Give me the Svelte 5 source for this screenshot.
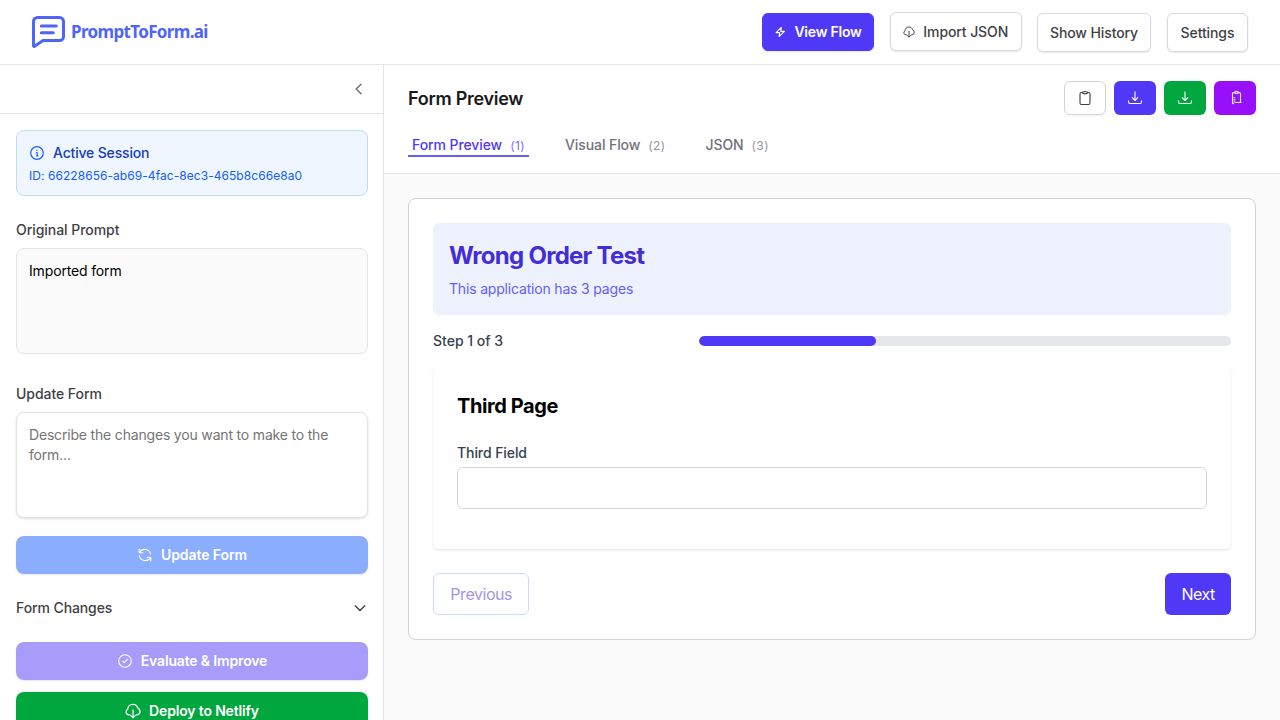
<script lang="ts">
  const tabs = [
    { label: 'Form Preview', key: '(1)' },
    { label: 'Visual Flow', key: '(2)' },
    { label: 'JSON', key: '(3)' },
  ];
  const sessionId = '66228656-ab69-4fac-8ec3-465b8c66e8a0';
  let active = $state(0);
  const progress = 100 / 3;
</script>

{#snippet cloud(size: number)}
  <svg width={size} height={size} viewBox="0 0 16 16" class="cloud">
    <path d="M4.800 11.800H3.900A2.900 2.900 0 0 1 2.700 6.300C2.800 3.600 4.900 1.300 7.800 1.300c2.400 0 4.400 1.500 5 3.800a3.500 3.500 0 0 1-.7 6.700H11.200M8 7v7.700M5.800 12.600 8 14.800l2.200-2.200" />
  </svg>
{/snippet}

{#snippet download()}
  <svg width="16" height="16" viewBox="0 0 16 16">
    <path d="M8 1.800v8.600M5.200 7.700 8 10.500l2.800-2.800M1.500 10.800v1.100c0 1 .6 1.600 1.600 1.600h9.800c1 0 1.600-.6 1.600-1.600v-1.100" />
  </svg>
{/snippet}

<div class="app">
  <header class="topbar">
    <div class="brand">
      <svg class="logo" width="33" height="32" viewBox="0 0 33 32">
        <path d="M5 1.500h22.500a4 4 0 0 1 4 4v15a4 4 0 0 1-4 4H11L2.600 30.300c-.5.400-1.100.1-1.100-.6V5.500a4 4 0 0 1 4-4Z" />
        <path d="M9.300 10h15M9.300 16.700h12" />
      </svg>
      <span>PromptToForm.ai</span>
    </div>
    <nav class="actions">
      <button class="btn solid flow">
        <svg width="12" height="12" viewBox="0 0 12 12"><path d="M7.300 1.500 2.100 6.600h3.500L5.100 10.500 10.400 5.400H6.900Z" /></svg>
        View Flow
      </button>
      <button class="btn import">{@render cloud(12)}Import JSON</button>
      <button class="btn history">Show History</button>
      <button class="btn settings">Settings</button>
    </nav>
  </header>

  <div class="body">
    <aside>
      <div class="collapse">
        <svg width="16" height="16" viewBox="0 0 16 16"><path d="M10 3.200 5.200 8l4.800 4.800" /></svg>
      </div>
      <div class="side">
        <section class="session">
          <div class="session-title">
            <svg width="16" height="16" viewBox="0 0 16 16"><circle cx="8" cy="8" r="6.300" /><path d="M7.400 7.500H8.200v3M7.600 10.800h1.300M7.900 5.100v.4" /></svg>
            Active Session
          </div>
          <div class="session-id">ID: {sessionId}</div>
        </section>

        <div class="label">Original Prompt</div>
        <div class="prompt">Imported form</div>

        <div class="label update">Update Form</div>
        <textarea placeholder="Describe the changes you want to make to the form..."></textarea>

        <button class="wide blue">
          <svg width="16" height="16" viewBox="0 0 16 16"><path d="M2.200 2v3.700h3.700M13.800 14v-3.700h-3.700M2.500 5.500A6 6 0 0 1 13.600 7.200M13.500 10.500A6 6 0 0 1 2.400 8.800" /></svg>
          Update Form
        </button>
        <div class="changes">
          Form Changes
          <svg width="16" height="16" viewBox="0 0 16 16"><path d="M3.300 5.700 8 10.400l4.700-4.700" /></svg>
        </div>
        <button class="wide violet">
          <svg width="16" height="16" viewBox="0 0 16 16"><circle cx="8" cy="8" r="6.300" /><path d="m5.700 8.200 1.600 1.500 3-3.400" /></svg>
          Evaluate &amp; Improve
        </button>
        <button class="wide green">{@render cloud(16)}Deploy to Netlify</button>
      </div>
    </aside>

    <main>
      <div class="main-head">
        <div class="title-row">
          <h1>Form Preview</h1>
          <div class="tools">
            <button class="tool plain" aria-label="Copy">
              <svg width="16" height="16" viewBox="0 0 16 16"><path d="M5.500 2.500h-1A1.500 1.500 0 0 0 3 4v9a1.500 1.500 0 0 0 1.500 1.500h7A1.500 1.500 0 0 0 13 13V4a1.500 1.500 0 0 0-1.500-1.500h-1M5.500 2.500C5.500 1.800 6.200 1.500 8 1.500s2.500.3 2.500 1c0 .8-.6 1.100-1.100 1.100H6.600c-.5 0-1.100-.3-1.100-1.100Z" /></svg>
            </button>
            <button class="tool indigo" aria-label="Download JSON">{@render download()}</button>
            <button class="tool emerald" aria-label="Download form">{@render download()}</button>
            <button class="tool purple" aria-label="Copy form">
              <svg width="16" height="16" viewBox="0 0 16 16"><path d="M7.700 2.500H7c-1 0-1.500.5-1.500 1.500v3.500M5.500 7.500v5.200c0 .7.300 1 1.200 1M11.300 2.500h.7c1 0 1.500.5 1.500 1.500v8.500H8M7.700 2.500c0-.8.600-1.100 1.800-1.100s1.800.3 1.800 1.100-.6 1-1 1H8.700c-.4 0-1-.2-1-1ZM7 7.800h.8M7 9.500h.8M7 11.200h.8M13.500 12.500h.5" /></svg>
            </button>
          </div>
        </div>
        <div class="tabs">
          {#each tabs as tab, i}
            <button class="tab" class:active={active === i} onclick={() => (active = i)}>{tab.label}<span>{tab.key}</span></button>
          {/each}
        </div>
      </div>

      <div class="canvas">
        <div class="card">
          <div class="banner">
            <h2>Wrong Order Test</h2>
            <p>This application has 3 pages</p>
          </div>
          <div class="step">
            <span>Step 1 of 3</span>
            <div class="track"><div class="fill" style="width: {progress}%"></div></div>
          </div>
          <div class="page">
            <h3>Third Page</h3>
            <label for="third">Third Field</label>
            <input id="third" type="text" />
          </div>
          <div class="pager">
            <button class="prev">Previous</button>
            <button class="next">Next</button>
          </div>
        </div>
      </div>
    </main>
  </div>
</div>

<style>
  :global(body) { margin: 0; background: #fff; overflow: hidden; }
  * { box-sizing: border-box; }
  .app { height: 720px; overflow: hidden; display: flex; flex-direction: column; font: 14px/20px Inter, sans-serif; color: #3f3f46; letter-spacing: -0.05px; }
  button, input, textarea { font: inherit; letter-spacing: inherit; margin: 0; }
  button { padding: 0; border: 0; background: none; color: inherit; white-space: nowrap; }
  h1, h2, h3, p { margin: 0; }
  svg { flex: none; display: block; fill: none; stroke: currentColor; stroke-width: 1.1; stroke-linecap: round; stroke-linejoin: round; }
  .cloud { stroke-width: 1.25; }

  .topbar { flex: none; height: 65px; border-bottom: 1px solid #e4e4e7; display: flex; justify-content: space-between; padding: 0 32px; }
  .brand { display: flex; align-items: center; gap: 6px; height: 64px; color: #4f65fa; font: 700 17px/24px "Noto Sans", sans-serif; letter-spacing: -0.65px; }
  .brand span { margin-top: -1px; }
  .logo { stroke-width: 3; }
  .actions { display: flex; align-items: flex-start; gap: 16px; padding-top: 13px; }
  .btn { height: 39px; border: 1px solid #d9d9dc; border-radius: 6px; background: #fff; display: flex; align-items: center; justify-content: center; gap: 8px; font-weight: 500; letter-spacing: -0.1px; box-shadow: 0 1px 2px #0000001a; }
  .solid { background: #4f39f6; border-color: #4f39f6; color: #fff; font-weight: 600; letter-spacing: -0.22px; }
  .flow { width: 112px; height: 38px; }
  .import { width: 131.5px; margin: -1px -0.5px 0 0; }
  .history { width: 114px; }
  .settings { width: 81px; }

  .body { flex: 1; min-height: 0; display: flex; }
  aside { width: 384px; flex: none; border-right: 1px solid #e4e4e7; }
  .collapse { height: 49px; border-bottom: 1px solid #e4e4e7; display: flex; align-items: center; justify-content: flex-end; padding-right: 16px; color: #71717b; }
  .collapse svg { stroke-width: 1.5; }
  .side { padding: 16px 15px 0 16px; display: flex; flex-direction: column; }
  .session { height: 66px; border: 1px solid #bedbff; border-radius: 8px; background: #eff6ff; padding: 12px; color: #155dfc; }
  .session-title { display: flex; align-items: center; gap: 8px; font-weight: 500; color: #193cb8; letter-spacing: -0.17px; }
  .session-title svg { color: #155dfc; stroke-width: 1.2; }
  .session-id { font-size: 12px; line-height: 16px; margin-top: 5px; letter-spacing: 0.055px; }
  .label { font-weight: 500; margin: 24px 0 8px; }
  .prompt { height: 106px; border: 1px solid #e4e4e7; border-radius: 8px; background: #fafafa; padding: 12px; color: #000; letter-spacing: -0.15px; }
  .label.update { margin-top: 30px; }
  textarea { display: block; width: 100%; height: 106px; padding: 12px; border: 1px solid #e4e4e7; border-radius: 8px; resize: none; background: #fff; box-shadow: 0 1px 3px #0000001f; overflow: hidden; letter-spacing: -0.18px; }
  textarea::placeholder { color: #757575; opacity: 1; }
  .wide { height: 38px; border-radius: 8px; display: flex; align-items: center; justify-content: center; gap: 8px; color: #fff; font-weight: 600; letter-spacing: -0.16px; box-shadow: 0 1px 2px #0000001a; }
  .blue { background: #8aadfe; margin-top: 18px; letter-spacing: -0.09px; }
  .violet { background: #a79cfa; }
  .green { background: #00a63e; margin-top: 12px; }
  .changes { height: 68px; display: flex; align-items: center; justify-content: space-between; font-weight: 500; letter-spacing: -0.1px; }
  .changes svg { stroke-width: 1.4; }

  main { flex: 1; min-width: 0; background: #fafafa; }
  .main-head { height: 109px; background: #fff; border-bottom: 1px solid #e4e4e7; padding: 16px 24px 0; }
  .title-row { height: 34px; display: flex; align-items: center; justify-content: space-between; }
  h1 { font-size: 18px; line-height: 28px; font-weight: 600; color: #18181b; letter-spacing: -0.27px; padding-top: 2px; }
  .tools { display: flex; gap: 8px; }
  .tool { width: 42px; height: 34px; border-radius: 6px; color: #fff; display: flex; align-items: center; justify-content: center; }
  .plain { border: 1px solid #d4d4d8; color: #3f3f46; box-shadow: 0 1px 2px #0000000d; }
  .indigo { background: #4f39f6; }
  .emerald { background: #00a63e; }
  .purple { background: #980ffa; }
  .tabs { display: flex; gap: 32px; margin-top: 20px; }
  .tab { height: 22px; padding: 0 4px; border-bottom: 2px solid transparent; font-weight: 500; color: #71717b; display: flex; align-items: center; gap: 8px; letter-spacing: -0.09px; }
  .tab span { font-size: 12px; font-weight: 400; opacity: .75; letter-spacing: 0.4px; padding-top: 1px; }
  .active { color: #4f39f6; border-color: #615fff; }

  .canvas { padding: 24px; }
  .card { height: 442px; border: 1px solid #d4d4d8; border-radius: 8px; background: #fff; padding: 24px; display: flex; flex-direction: column; }
  .banner { height: 92px; background: #eef2ff; border-radius: 6px; padding: 16px; color: #615fff; }
  h2 { font-size: 24px; line-height: 34px; font-weight: 700; color: #432dd7; letter-spacing: -0.73px; }
  .banner p { margin-top: 6px; letter-spacing: -0.18px; }
  .step { height: 20px; margin-top: 16px; display: flex; align-items: center; justify-content: space-between; font-weight: 500; color: #364153; letter-spacing: 0; }
  .track { width: 532px; height: 10px; border-radius: 5px; background: #e5e7eb; overflow: hidden; }
  .fill { height: 100%; border-radius: 5px; background: #4f39f6; }
  .page { height: 182px; margin-top: 16px; border-radius: 6px; padding: 24px; box-shadow: 0 1px 3px #0000001a, 0 1px 2px -1px #0000001a; }
  h3 { font-size: 20px; line-height: 30px; font-weight: 700; color: #000; letter-spacing: -0.42px; }
  label { display: block; font-weight: 500; color: #364153; margin: 22px 0 4px; letter-spacing: -0.08px; }
  input { display: block; width: 100%; height: 42px; border: 1px solid #d1d5dc; border-radius: 6px; background: #fff; }
  .pager { display: flex; justify-content: space-between; margin-top: 24px; font-size: 16px; line-height: 24px; letter-spacing: -0.45px; }
  .prev { width: 96.4px; height: 42px; border: 1px solid #cdd8ff; border-radius: 6px; color: #a196eb; }
  .next { width: 65.700px; height: 42px; border-radius: 6px; background: #4f39f6; color: #fff; }
</style>
